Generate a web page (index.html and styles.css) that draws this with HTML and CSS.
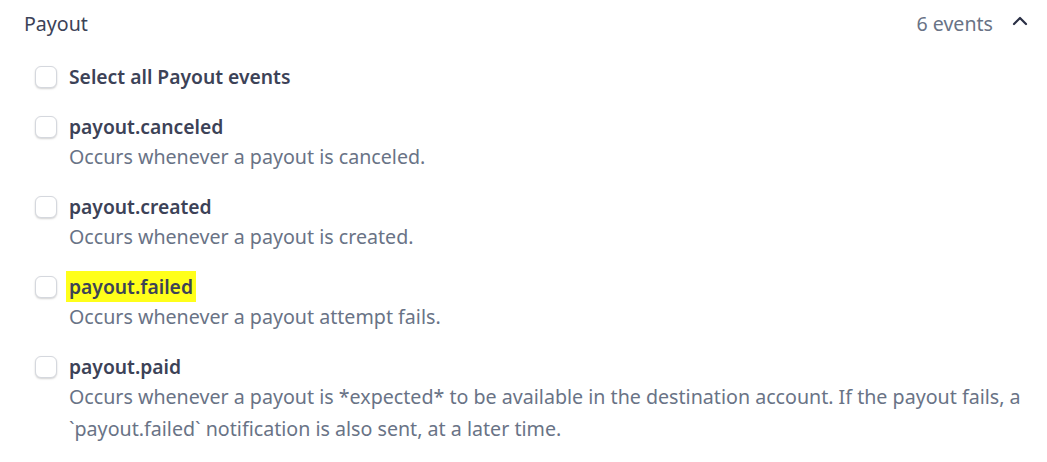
FILE: index.html
```html
<!DOCTYPE html>
<html>
<head>
<meta charset="utf-8">
<link rel="stylesheet" href="styles.css">
</head>
<body>
<section class="group">
  <header class="group-head">
    <span class="group-title">Payout</span>
    <span class="group-meta">6 events
      <svg class="chev" width="18" height="18" viewBox="0 0 18 18"><path d="M3 12 L9 6 L15 12" fill="none" stroke="#2a2f45" stroke-width="2.2" stroke-linecap="round" stroke-linejoin="round"/></svg>
    </span>
  </header>
  <ul class="events">
    <li class="event select-all">
      <span class="box"></span>
      <div class="text"><div class="name">Select all Payout events</div></div>
    </li>
    <li class="event">
      <span class="box"></span>
      <div class="text"><div class="name">payout.canceled</div><div class="desc">Occurs whenever a payout is canceled.</div></div>
    </li>
    <li class="event">
      <span class="box"></span>
      <div class="text"><div class="name">payout.created</div><div class="desc">Occurs whenever a payout is created.</div></div>
    </li>
    <li class="event">
      <span class="box"></span>
      <div class="text"><div class="name"><mark class="hl">payout.failed</mark></div><div class="desc">Occurs whenever a payout attempt fails.</div></div>
    </li>
    <li class="event">
      <span class="box"></span>
      <div class="text"><div class="name">payout.paid</div><div class="desc">Occurs whenever a payout is *expected* to be available in the destination account. If the payout fails, a `payout.failed` notification is also sent, at a later time.</div></div>
    </li>
  </ul>
</section>
</body>
</html>
```
FILE: styles.css
```css
* { box-sizing: border-box; }
html, body { margin: 0; padding: 0; background: #fff; }
body { font-family: "Noto Sans", "Open Sans", sans-serif; color: #3c4257; }
.group { padding: 8px 18px 0 24px; width: 1047px; }
.group-head { display: flex; justify-content: space-between; align-items: center; height: 30px; }
.group-title { font-size: 19.6px; color: #3c4257; }
.group-meta { font-size: 19.6px; color: #697386; display: flex; align-items: center; gap: 18px; }
.chev { margin-top: -4px; }
.events { list-style: none; margin: 0; padding: 24px 0 0 11px; }
.event { display: flex; gap: 12px; margin-bottom: 19px; }
.select-all { margin-bottom: 20px; }
.box { flex: none; width: 22px; height: 22px; border-radius: 6px; background: #fff; border: 1px solid #d5d8de; box-shadow: 0 1px 2px rgba(0,0,0,0.18); margin-top: 4px; }
.name { font-size: 19.3px; font-weight: 600; line-height: 30px; color: #3c4257; }
.hl { background: #ffff1a; color: #3c4257; padding: 2px 3px; margin-left: -3px; }
.desc { font-size: 19.65px; line-height: 32px; color: #697386; margin-top: -1px; }
```
